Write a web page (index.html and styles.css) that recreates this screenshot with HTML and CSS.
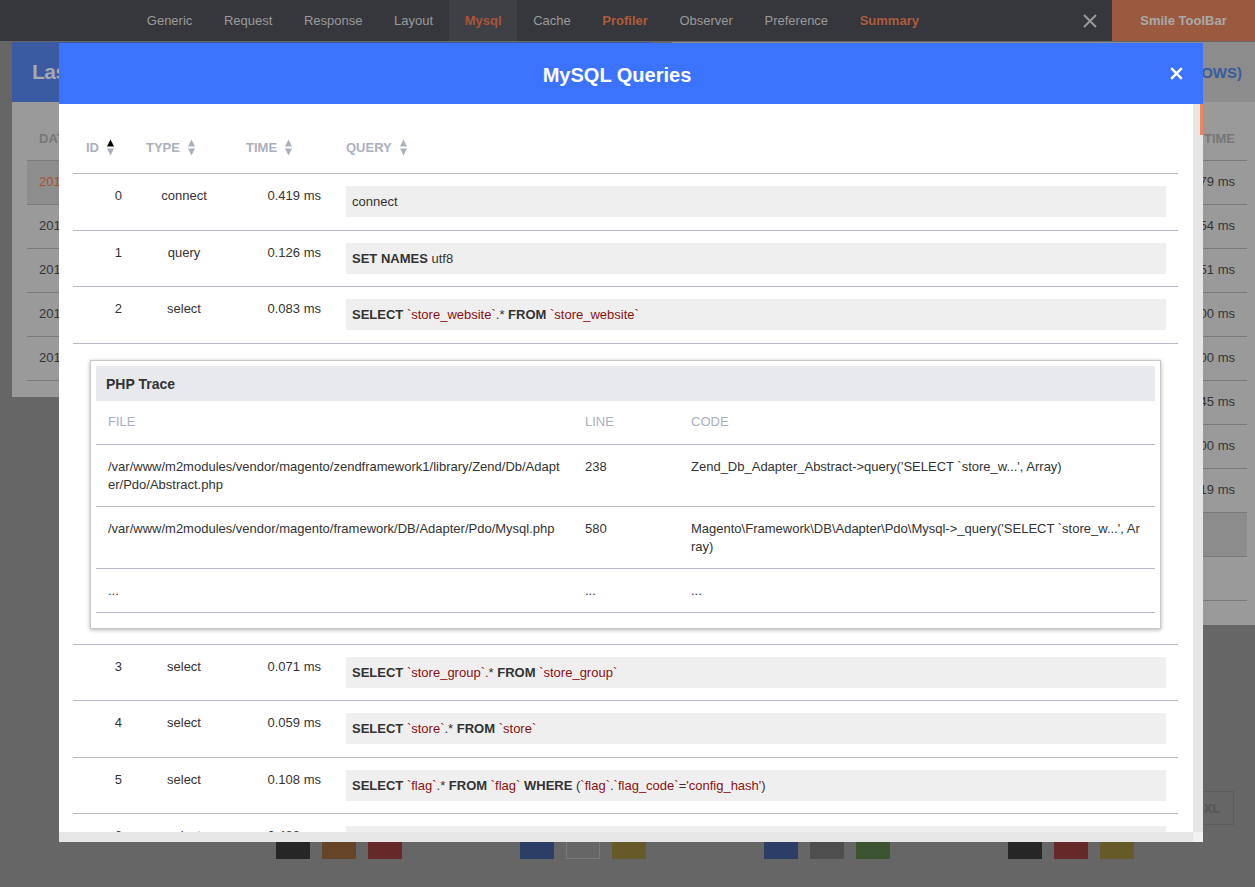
FILE: index.html
```html
<!DOCTYPE html>
<html lang="en">
<head>
<meta charset="utf-8">
<title>MySQL Queries</title>
<link rel="stylesheet" href="styles.css">
</head>
<body>
<header class="topbar">
  <nav class="nav">
    <span class="nav-item">Generic</span>
    <span class="nav-item">Request</span>
    <span class="nav-item">Response</span>
    <span class="nav-item">Layout</span>
    <span class="nav-item hot active">Mysql</span>
    <span class="nav-item">Cache</span>
    <span class="nav-item hot">Profiler</span>
    <span class="nav-item">Observer</span>
    <span class="nav-item">Preference</span>
    <span class="nav-item hot">Summary</span>
  </nav>
  <span class="spacer"></span>
  <span class="topbar-close"><svg width="14" height="14" viewBox="0 0 14 14"><path d="M1 1L13 13M13 1L1 13" stroke="#9a9a9a" stroke-width="2" fill="none"/></svg></span>
  <span class="brand">Smile ToolBar</span>
</header>

<main class="page">
  <div class="cards">
    <section class="card card-left">
      <div class="card-head card-head-blue"><h2 class="card-title">Last Requests</h2></div>
      <div class="ctable">
        <div class="ct-row ct-head"><span class="ct-cell">DATE</span></div>
        <div class="ct-row ct-active"><span class="ct-cell">2017-04-12 10:21:14</span></div>
        <div class="ct-row"><span class="ct-cell">2017-04-12 10:20:52</span></div>
        <div class="ct-row"><span class="ct-cell">2017-04-12 10:20:31</span></div>
        <div class="ct-row"><span class="ct-cell">2017-04-12 10:19:07</span></div>
        <div class="ct-row"><span class="ct-cell">2017-04-12 10:18:44</span></div>
      </div>
    </section>
    <section class="card card-right">
      <div class="card-head card-head-gray"><span class="card-sub">Last Queries (10 rows)</span></div>
      <div class="ctable ctable-right">
        <div class="ct-row ct-head"><span class="ct-cell">TIME</span></div>
        <div class="ct-row"><span class="ct-cell">0.379 ms</span></div>
        <div class="ct-row"><span class="ct-cell">0.254 ms</span></div>
        <div class="ct-row"><span class="ct-cell">0.351 ms</span></div>
        <div class="ct-row"><span class="ct-cell">1.000 ms</span></div>
        <div class="ct-row"><span class="ct-cell">2.000 ms</span></div>
        <div class="ct-row"><span class="ct-cell">0.145 ms</span></div>
        <div class="ct-row"><span class="ct-cell">3.000 ms</span></div>
        <div class="ct-row"><span class="ct-cell">0.219 ms</span></div>
        <div class="ct-row ct-gray"><span class="ct-cell">&nbsp;</span></div>
        <div class="ct-row"><span class="ct-cell">&nbsp;</span></div>
      </div>
    </section>
  </div>

  <div class="bottom">
    <div class="sizes"><span class="size-btn">XL</span></div>
    <div class="swatches">
      <div class="sw-group"><span class="sw sw-black"></span><span class="sw sw-orange"></span><span class="sw sw-red"></span></div>
      <div class="sw-group"><span class="sw sw-blue"></span><span class="sw sw-white"></span><span class="sw sw-yellow"></span></div>
      <div class="sw-group"><span class="sw sw-blue"></span><span class="sw sw-gray"></span><span class="sw sw-green"></span></div>
      <div class="sw-group"><span class="sw sw-black"></span><span class="sw sw-red"></span><span class="sw sw-yellow"></span></div>
    </div>
  </div>
</main>

<div class="modal">
  <div class="modal-head">
    <h1 class="modal-title">MySQL Queries</h1>
    <span class="modal-close"><svg width="13" height="13" viewBox="0 0 13 13"><path d="M1.2 1.2L11.8 11.8M11.8 1.2L1.2 11.8" stroke="#fff" stroke-width="2.4" fill="none"/></svg></span>
  </div>
  <div class="modal-body">
    <div class="modal-main">
      <div class="modal-scroll">
        <div class="qtable">
          <div class="qrow qhead">
            <div class="c-id"><span>ID</span><svg class="sort" width="7" height="17" viewBox="0 0 7 17"><polygon points="3.5,0.5 7,7.5 0,7.5" fill="#000"/><polygon points="0,9.5 7,9.5 3.5,16.5" fill="#aab0bd"/></svg></div>
            <div class="c-type"><span>TYPE</span><svg class="sort" width="7" height="17" viewBox="0 0 7 17"><polygon points="3.5,0.5 7,7.5 0,7.5" fill="#aab0bd"/><polygon points="0,9.5 7,9.5 3.5,16.5" fill="#aab0bd"/></svg></div>
            <div class="c-time"><span>TIME</span><svg class="sort" width="7" height="17" viewBox="0 0 7 17"><polygon points="3.5,0.5 7,7.5 0,7.5" fill="#aab0bd"/><polygon points="0,9.5 7,9.5 3.5,16.5" fill="#aab0bd"/></svg></div>
            <div class="c-query"><span>QUERY</span><svg class="sort" width="7" height="17" viewBox="0 0 7 17"><polygon points="3.5,0.5 7,7.5 0,7.5" fill="#aab0bd"/><polygon points="0,9.5 7,9.5 3.5,16.5" fill="#aab0bd"/></svg></div>
          </div>

          <div class="qrow">
            <div class="c-id">0</div><div class="c-type">connect</div><div class="c-time">0.419 ms</div>
            <div class="c-query"><div class="qbox">connect</div></div>
          </div>
          <div class="qrow">
            <div class="c-id">1</div><div class="c-type">query</div><div class="c-time">0.126 ms</div>
            <div class="c-query"><div class="qbox"><b>SET NAMES</b> utf8</div></div>
          </div>
          <div class="qrow">
            <div class="c-id">2</div><div class="c-type">select</div><div class="c-time">0.083 ms</div>
            <div class="c-query"><div class="qbox"><b>SELECT</b> <em>`store_website`</em>.* <b>FROM</b> <em>`store_website`</em></div></div>
          </div>

          <div class="trace-row">
            <div class="trace">
              <div class="trace-title">PHP Trace</div>
              <div class="ttable">
                <div class="trow thead"><div class="t-file">FILE</div><div class="t-line">LINE</div><div class="t-code">CODE</div></div>
                <div class="trow"><div class="t-file">/var/www/m2modules/vendor/magento/zendframework1/library/Zend/Db/Adapter/Pdo/Abstract.php</div><div class="t-line">238</div><div class="t-code">Zend_Db_Adapter_Abstract-&gt;query('SELECT `store_w...', Array)</div></div>
                <div class="trow"><div class="t-file">/var/www/m2modules/vendor/magento/framework/DB/Adapter/Pdo/Mysql.php</div><div class="t-line">580</div><div class="t-code">Magento\Framework\DB\Adapter\Pdo\Mysql-&gt;_query('SELECT `store_w...', Array)</div></div>
                <div class="trow"><div class="t-file">...</div><div class="t-line">...</div><div class="t-code">...</div></div>
              </div>
            </div>
          </div>

          <div class="qrow">
            <div class="c-id">3</div><div class="c-type">select</div><div class="c-time">0.071 ms</div>
            <div class="c-query"><div class="qbox"><b>SELECT</b> <em>`store_group`</em>.* <b>FROM</b> <em>`store_group`</em></div></div>
          </div>
          <div class="qrow">
            <div class="c-id">4</div><div class="c-type">select</div><div class="c-time">0.059 ms</div>
            <div class="c-query"><div class="qbox"><b>SELECT</b> <em>`store`</em>.* <b>FROM</b> <em>`store`</em></div></div>
          </div>
          <div class="qrow">
            <div class="c-id">5</div><div class="c-type">select</div><div class="c-time">0.108 ms</div>
            <div class="c-query"><div class="qbox"><b>SELECT</b> <em>`flag`</em>.* <b>FROM</b> <em>`flag`</em> <b>WHERE</b> (<em>`flag`</em>.<em>`flag_code`</em>=<em>'config_hash'</em>)</div></div>
          </div>
          <div class="qrow">
            <div class="c-id">6</div><div class="c-type">select</div><div class="c-time">0.488 ms</div>
            <div class="c-query"><div class="qbox"><b>SELECT</b> <em>`core_config_data`</em>.* <b>FROM</b> <em>`core_config_data`</em></div></div>
          </div>
        </div>
      </div>
      <div class="vscroll"><div class="vthumb"></div></div>
    </div>
    <div class="hscroll"><div class="hcorner"></div></div>
  </div>
</div>
</body>
</html>
```

FILE: styles.css
```css
html, body {
  margin: 0;
  padding: 0;
}
body {
  width: 1255px;
  height: 887px;
  overflow: hidden;
  position: relative;
  background: #666666;
  font-family: "Liberation Sans", Arial, sans-serif;
  font-size: 13px;
  color: #333;
}

/* ---------- top bar ---------- */
.topbar {
  display: flex;
  height: 41px;
  background: #36373c;
}
.nav {
  display: flex;
  margin-left: 131px;
}
.nav-item {
  padding: 0 15.8px;
  line-height: 41px;
  color: #9a9a9a;
  white-space: nowrap;
}
.nav-item.hot {
  color: #b05c3e;
  font-weight: bold;
}
.nav-item.active {
  background: #3f4045;
  color: #a8553a;
}
.spacer { flex: 1; }
.topbar-close {
  width: 44px;
  display: flex;
  align-items: center;
  justify-content: center;
}
.brand {
  width: 143px;
  background: #9b5a40;
  color: #a9a9a9;
  font-weight: bold;
  text-align: center;
  line-height: 41px;
}

/* ---------- page behind the modal ---------- */
.cards {
  display: flex;
  align-items: flex-start;
  gap: 20px;
  padding-top: 1px;
}
.card {
  background: #9a9a9a;
}
.card-left {
  margin-left: 12px;
  width: 640px;
  padding-bottom: 16px;
}
.card-right {
  flex: 1;
  padding-bottom: 24px;
}
.card-head {
  height: 60px;
  display: flex;
  align-items: center;
}
.card-head-blue {
  background: #3a5aa2;
}
.card-head-gray {
  background: #8c8c8c;
  justify-content: flex-end;
  padding-right: 13px;
}
.card-title {
  margin: 0;
  padding-left: 20px;
  font-size: 21px;
  font-weight: bold;
  letter-spacing: -0.5px;
  color: #a6a9b0;
}
.card-sub {
  font-size: 15px;
  font-weight: bold;
  color: #3a5a9e;
  text-transform: uppercase;
}
.ctable {
  padding: 0 15px;
}
.ctable-right {
  padding: 0 8px 0 15px;
}
.ct-row {
  display: flex;
  padding: 12px 0 13px;
  line-height: 18px;
  border-bottom: 1px solid #7a7a7a;
  color: #333;
}
.ct-head {
  padding: 28px 0 12px;
  font-weight: bold;
  color: #777;
}
.ct-cell {
  padding: 0 12px;
  white-space: nowrap;
}
.ctable-right .ct-row {
  justify-content: flex-end;
}
.ct-active {
  background: #8e8e8e;
  color: #a4522c;
}
.ct-gray {
  background: #8c8c8c;
}

.bottom {
  margin-top: 166px;
}
.sizes {
  display: flex;
  justify-content: flex-end;
  padding-right: 21px;
}
.size-btn {
  width: 44px;
  height: 34px;
  box-sizing: border-box;
  border: 1px solid #5c5c5c;
  color: #555;
  font-weight: bold;
  display: flex;
  align-items: center;
  justify-content: center;
}
.swatches {
  display: flex;
  padding-left: 217px;
}
.sw-group {
  width: 244px;
  display: flex;
  justify-content: center;
  gap: 12px;
}
.sw {
  width: 34px;
  height: 34px;
  box-sizing: border-box;
}
.sw-black { background: #262626; }
.sw-orange { background: #664428; }
.sw-red { background: #662828; }
.sw-blue { background: #2c3e66; }
.sw-white { background: #666; border: 1px solid #7a7a7a; }
.sw-yellow { background: #665a28; }
.sw-gray { background: #4e4e4e; }
.sw-green { background: #3c5432; }

/* ---------- modal ---------- */
.modal {
  position: absolute;
  left: 59px;
  top: 43px;
  width: 1144px;
  height: 799px;
  background: #fff;
  display: flex;
  flex-direction: column;
}
.modal-head {
  flex: none;
  height: 61px;
  background: #3b73fe;
  display: flex;
  align-items: center;
  padding-right: 13px;
}
.modal-title {
  flex: 1;
  margin: 0;
  padding: 3px 0 0 13px;
  text-align: center;
  color: #fff;
  font-size: 20px;
  font-weight: bold;
  line-height: 24px;
}
.modal-close {
  width: 28px;
  height: 28px;
  display: flex;
  align-items: center;
  justify-content: center;
}
.modal-body {
  flex: 1;
  min-height: 0;
  display: flex;
  flex-direction: column;
}
.modal-main {
  flex: 1;
  min-height: 0;
  display: flex;
}
.modal-scroll {
  flex: 1;
  overflow: hidden;
  padding: 18px 15px 0 14px;
}
.vscroll {
  width: 10px;
  background: #e6e6e6;
  display: flex;
  justify-content: flex-end;
}
.vthumb {
  width: 3px;
  height: 31px;
  background: #f0875a;
}
.hscroll {
  flex: none;
  height: 10px;
  background: #e6e6e6;
  display: flex;
  justify-content: flex-end;
}
.hcorner {
  width: 10px;
  background: #f2f2f2;
}

/* query table */
.qrow {
  display: grid;
  grid-template-columns: 62px 100px 100px 1fr;
  padding: 12px 0 12.5px;
  border-bottom: 1px solid #b5b9c6;
  line-height: 18px;
}
.qhead {
  box-sizing: border-box;
  height: 52px;
  padding: 0;
  align-items: center;
  font-weight: bold;
  color: #aab0bd;
}
.qhead > div {
  display: flex;
  align-items: center;
  text-align: left;
}
.qhead .c-id { padding: 0 0 0 13px; justify-content: flex-start; }
.qhead .c-type, .qhead .c-time, .qhead .c-query { padding: 0 0 0 11px; }
.sort {
  margin-left: 8px;
  display: block;
}
.c-id {
  text-align: right;
  padding: 1px 13px 0 0;
}
.c-type {
  text-align: center;
  padding: 1px 2px 0 0;
}
.c-time {
  text-align: right;
  padding: 1px 14px 0 0;
  white-space: nowrap;
}
.c-query {
  padding: 0 12px 0 11px;
}
.qbox {
  background: #efefef;
  height: 31px;
  box-sizing: border-box;
  padding: 7px 6px 6px;
  line-height: 18px;
  white-space: nowrap;
  overflow: hidden;
}
.qbox b {
  font-weight: bold;
  color: #333;
}
.qbox em {
  font-style: normal;
  color: #8b1111;
}

/* trace */
.trace-row {
  padding: 16px 17px 15px;
  border-bottom: 1px solid #b5b9c6;
}
.trace {
  border: 1px solid #c8c8c8;
  box-shadow: 0 1px 4px rgba(0, 0, 0, 0.3);
  padding: 5px 5px 15px;
  background: #fff;
}
.trace-title {
  height: 35px;
  line-height: 36px;
  background: #e8e9ec;
  padding-left: 10px;
  font-size: 14px;
  font-weight: bold;
  color: #333;
}
.trow {
  display: grid;
  grid-template-columns: 479px 106px 1fr;
  padding: 13px 0 12px;
  line-height: 18px;
  border-bottom: 1px solid #b5b9c6;
  color: #333;
}
.thead {
  box-sizing: border-box;
  height: 44px;
  padding: 0;
  align-items: center;
  color: #aab0bd;
}
.t-file {
  padding: 0 12px;
  word-break: break-all;
}
.t-line {
  padding: 0 10px;
}
.t-code {
  padding: 0 14px 0 10px;
  word-break: break-all;
}
```
